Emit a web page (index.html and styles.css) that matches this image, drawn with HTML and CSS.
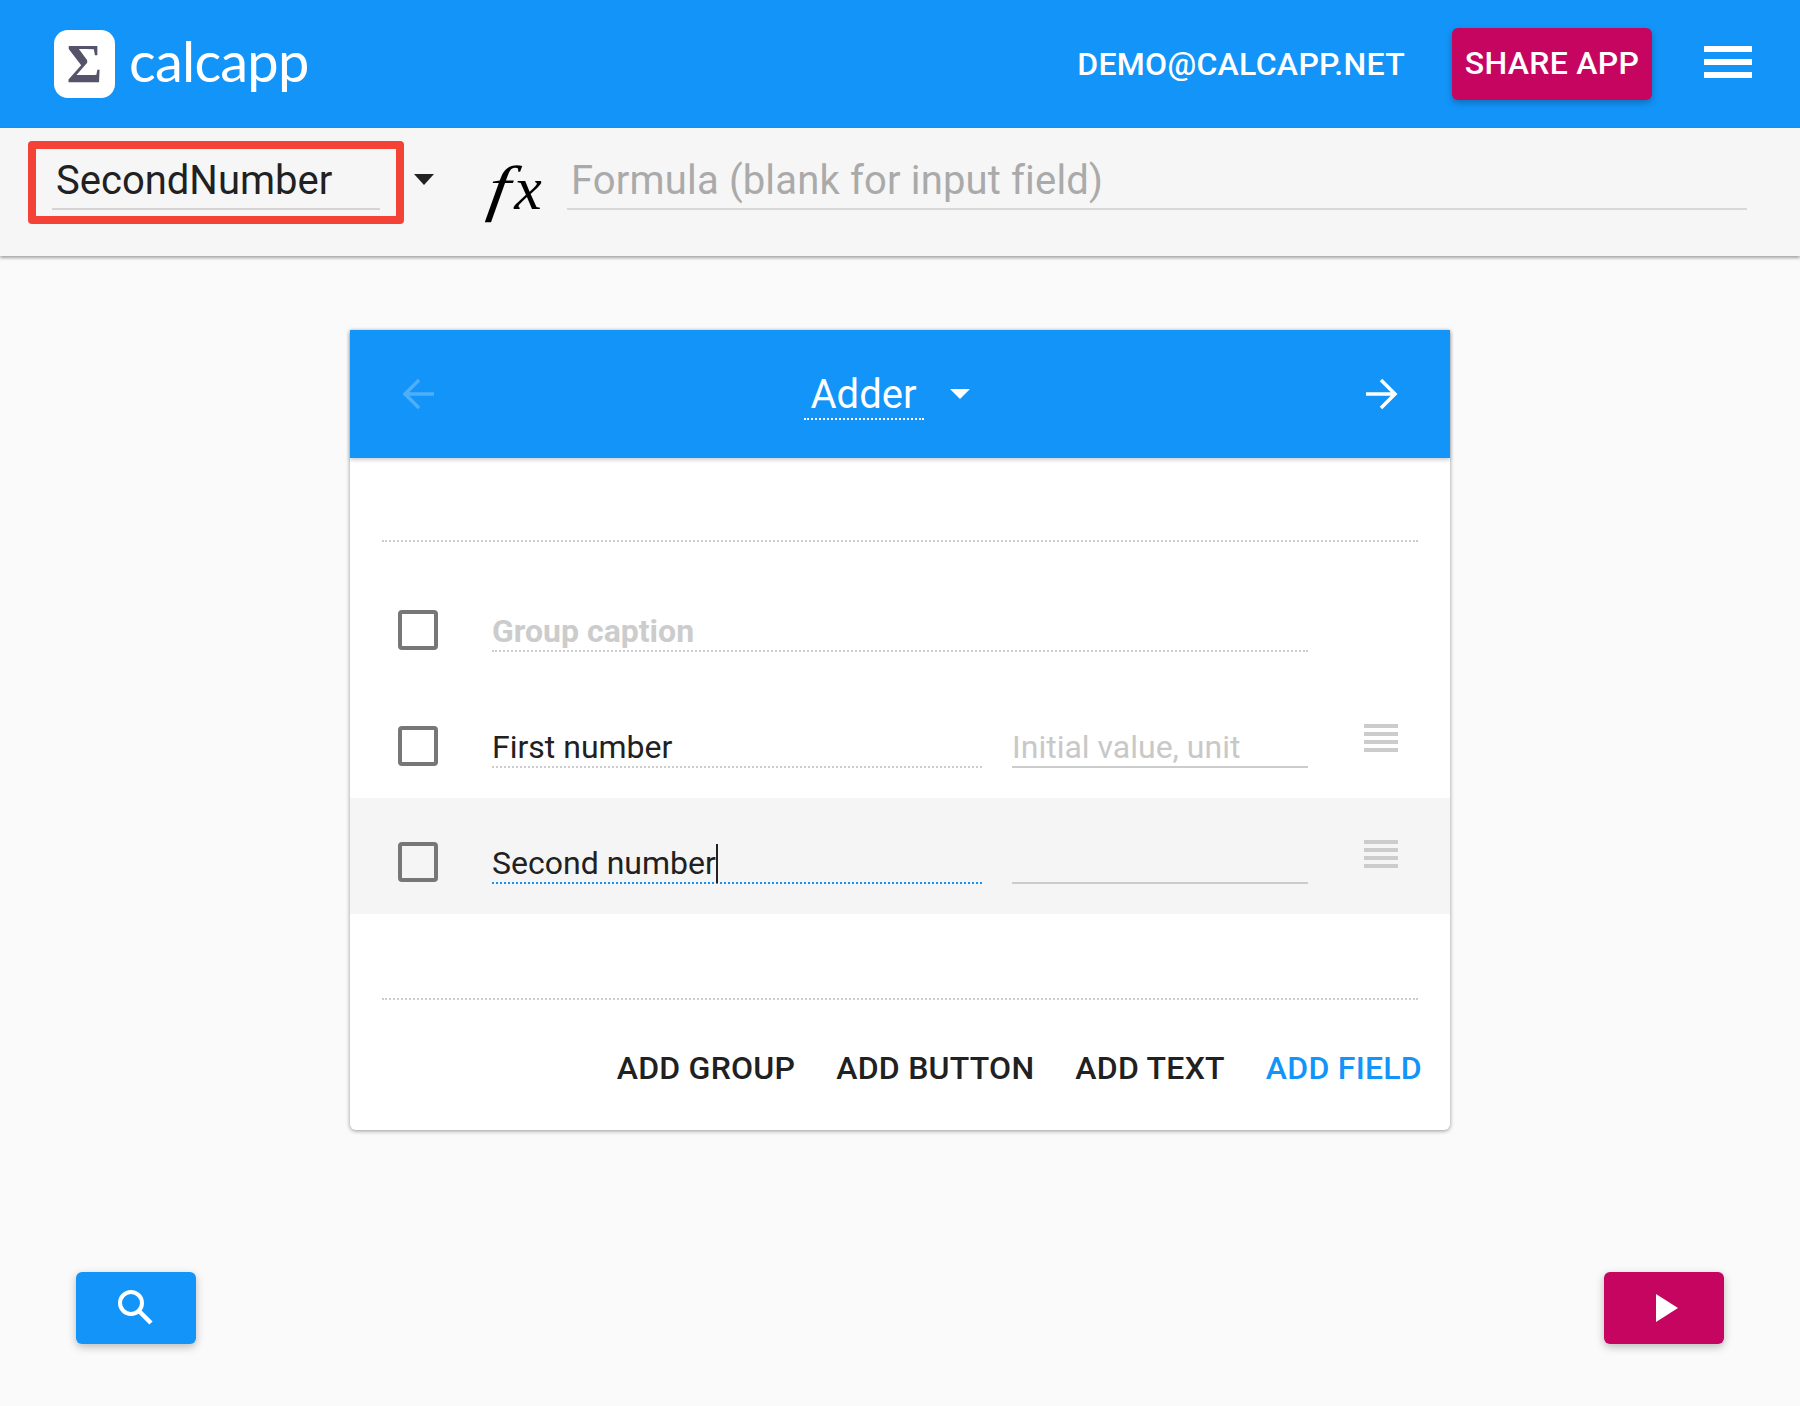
FILE: index.html
```html
<!DOCTYPE html>
<html lang="en">
<head>
<meta charset="utf-8">
<title>Calcapp</title>
<link rel="stylesheet" href="styles.css">
</head>
<body>
<header class="appbar">
  <div class="logo-box"><span class="sigma">Σ</span></div>
  <div class="wordmark">calcapp</div>
  <div class="account">DEMO@CALCAPP.NET</div>
  <div class="share">SHARE APP</div>
  <div class="burger"><span></span><span></span><span></span></div>
</header>
<section class="toolbar">
  <div class="name-box"><div class="name-field">SecondNumber</div></div>
  <div class="tri tri-dark"></div>
  <div class="fx"><span class="fx-f">f</span>x</div>
  <div class="formula">Formula (blank for input field)</div>
</section>
<main class="stage">
  <article class="card">
    <div class="card-head">
      <svg class="arrow arrow-off" viewBox="0 0 32 32"><path d="M32 16H3M17 2L3 16l14 14" fill="none" stroke="#fff" stroke-width="3.5"/></svg>
      <div class="title-wrap">
        <div class="title">Adder</div>
        <div class="tri tri-light"></div>
      </div>
      <svg class="arrow" viewBox="0 0 32 32"><path d="M0 16h29M15 2l14 14-14 14" fill="none" stroke="#fff" stroke-width="3.5"/></svg>
    </div>
    <div class="card-body">
      <div class="divider"></div>
      <div class="rows">
        <div class="row">
          <div class="check"></div>
          <div class="field field-wide caption">Group caption</div>
        </div>
        <div class="row">
          <div class="check"></div>
          <div class="field">First number</div>
          <div class="value placeholder">Initial value, unit</div>
          <div class="handle"></div>
        </div>
        <div class="row row-active">
          <div class="check"></div>
          <div class="field field-focus">Second number<span class="cursor"></span></div>
          <div class="value"></div>
          <div class="handle"></div>
        </div>
      </div>
      <div class="divider divider-low"></div>
      <div class="actions">
        <span class="action">ADD GROUP</span>
        <span class="action">ADD BUTTON</span>
        <span class="action">ADD TEXT</span>
        <span class="action action-primary">ADD FIELD</span>
      </div>
    </div>
  </article>
</main>
<footer class="fabs">
  <div class="fab fab-blue">
    <svg class="fab-search" viewBox="0 0 44 44"><circle cx="15" cy="15" r="11" fill="none" stroke="#fff" stroke-width="4"/><path d="M23 23L35 35" fill="none" stroke="#fff" stroke-width="4.5"/></svg>
  </div>
  <div class="fab fab-red">
    <svg class="fab-play" viewBox="0 0 22 28"><path d="M0 0l22 14L0 28z" fill="#fff"/></svg>
  </div>
</footer>
</body>
</html>
```

FILE: styles.css
```css
* { box-sizing: border-box; }
html, body { margin: 0; padding: 0; }
body {
  width: 1800px;
  height: 1406px;
  background: #fafafa;
  font-family: Roboto, "Liberation Sans", sans-serif;
  color: #212121;
  overflow: hidden;
}
.appbar {
  height: 128px;
  background: #1394f8;
  display: flex;
  align-items: center;
  padding: 0 48px 0 54px;
  color: #fff;
}
.logo-box {
  width: 61px;
  height: 68px;
  background: #fff;
  border-radius: 14px;
  display: flex;
  align-items: center;
  justify-content: center;
}
.sigma {
  font-family: "Liberation Serif", serif;
  font-weight: 700;
  font-size: 54px;
  line-height: 70px;
  color: #55536a;
}
.wordmark {
  font-family: Lato, sans-serif;
  font-weight: 400;
  font-size: 56px;
  line-height: 68px;
  margin-left: 14px;
  margin-top: -6px;
  letter-spacing: -0.8px;
}
.account {
  margin-left: auto;
  font-size: 32px;
  font-weight: 500;
  letter-spacing: 0.3px;
  line-height: 40px;
}
.share {
  width: 200px;
  height: 72px;
  margin-left: 47px;
  background: #c60561;
  border-radius: 6px;
  box-shadow: 0 3px 6px rgba(0, 0, 0, 0.25);
  font-size: 32px;
  font-weight: 500;
  letter-spacing: 0.3px;
  line-height: 70px;
  text-align: center;
}
.burger {
  width: 48px;
  height: 32px;
  margin: -4px 0 0 52px;
  display: flex;
  flex-direction: column;
  justify-content: space-between;
}
.burger span {
  display: block;
  height: 6px;
  background: #fff;
}
.toolbar {
  height: 128px;
  background: #f6f6f6;
  box-shadow: 0 2px 3px rgba(0, 0, 0, 0.35);
  display: flex;
  align-items: flex-start;
  padding: 13px 53px 0 28px;
  position: relative;
}
.name-box {
  width: 376px;
  height: 83px;
  border: 8px solid #f44336;
  border-radius: 4px;
  padding: 7px 16px 0 16px;
}
.name-field {
  height: 54px;
  padding: 0 0 0 4px;
  font-size: 40px;
  line-height: 50px;
  border-bottom: 2px solid #d4d4d4;
}
.tri {
  width: 0;
  height: 0;
  border-style: solid;
  border-color: transparent;
  border-bottom-width: 0;
}
.tri-dark {
  border-width: 11px 10.5px 0;
  border-top-color: #212121;
  margin: 33px 0 0 10px;
}
.fx {
  font-family: "Liberation Serif", serif;
  font-style: italic;
  font-size: 62px;
  line-height: 70px;
  color: #000;
  width: 81px;
  margin: 12px 0 0 52px;
}
.fx-f {
  display: inline-block;
  padding-right: 11px;
  transform: skewX(-8deg) scaleX(1.25);
  transform-origin: 0 54px;
}
.formula {
  flex: 1;
  height: 54px;
  margin-top: 15px;
  padding-left: 4px;
  font-size: 40px;
  font-weight: 400;
  letter-spacing: 0.16px;
  line-height: 50px;
  color: #aaa;
  border-bottom: 2px solid #d8d8d8;
}
.stage {
  padding: 74px 350px 0;
}
.card {
  background: #fff;
  height: 800px;
  border-radius: 0 0 6px 6px;
  box-shadow: 0 1px 4px rgba(0, 0, 0, 0.4);
}
.card-head {
  height: 128px;
  background: #1394f8;
  display: flex;
  align-items: center;
  justify-content: space-between;
  padding: 0 52px;
  box-shadow: 0 2px 4px rgba(0, 0, 0, 0.2);
  position: relative;
}
.arrow {
  width: 32px;
  height: 32px;
  display: block;
}
.arrow-off { opacity: 0.25; }
.title-wrap {
  display: flex;
  align-items: center;
  margin-left: -27px;
}
.title {
  width: 120px;
  height: 52px;
  text-align: center;
  color: #fff;
  font-size: 40px;
  line-height: 53px;
  border-bottom: 2px dotted #fff;
}
.tri-light {
  border-width: 10px 10px 0;
  border-top-color: #fff;
  margin-left: 26px;
}
.card-body {
  padding-top: 82px;
}
.divider {
  margin: 0 32px;
  border-top: 2px dotted #ccc;
}
.divider-low { margin-top: 84px; }
.rows { margin-top: 24px; }
.row {
  height: 116px;
  display: flex;
  align-items: flex-start;
  padding: 44px 0 0 48px;
}
.row-active { background: #f5f5f5; }
.check {
  width: 40px;
  height: 40px;
  border: 4px solid #777;
  border-radius: 4px;
  margin-right: 54px;
  flex: none;
}
.field {
  width: 490px;
  height: 42px;
  padding-top: 1px;
  font-size: 32px;
  line-height: 40px;
  border-bottom: 2px dotted #ccc;
  margin-right: 30px;
}
.field-wide { width: 816px; margin-right: 0; }
.caption {
  font-weight: 700;
  color: #ccc;
}
.field-focus {
  border-bottom-color: #1394f8;
  position: relative;
}
.cursor {
  display: inline-block;
  width: 2px;
  height: 39px;
  background: #212121;
  vertical-align: -9px;
  margin-left: 0;
}
.value {
  width: 296px;
  height: 42px;
  padding-top: 1px;
  font-size: 32px;
  font-weight: 400;
  line-height: 40px;
  border-bottom: 2px solid #ccc;
}
.placeholder { color: #c8c8c8; }
.handle {
  width: 34px;
  height: 28px;
  margin: -2px 0 0 56px;
  background: repeating-linear-gradient(#ccc 0, #ccc 4px, transparent 4px, transparent 8px);
}
.actions {
  display: flex;
  justify-content: flex-end;
  gap: 41px;
  padding: 48px 28px 0 0;
}
.action {
  font-size: 32px;
  font-weight: 500;
  letter-spacing: 0.25px;
  line-height: 40px;
}
.action-primary { color: #1394f8; }
.fabs {
  display: flex;
  justify-content: space-between;
  padding: 142px 76px 0;
}
.fab {
  width: 120px;
  height: 72px;
  border-radius: 6px;
  box-shadow: 0 3px 8px rgba(0, 0, 0, 0.25);
  display: flex;
  align-items: center;
  justify-content: center;
}
.fab-blue { background: #1394f8; }
.fab-red { background: #c60561; }
.fab-search { width: 44px; height: 44px; margin: 4px 0 0 4px; }
.fab-play { width: 22px; height: 28px; margin-left: 5px; }
```
